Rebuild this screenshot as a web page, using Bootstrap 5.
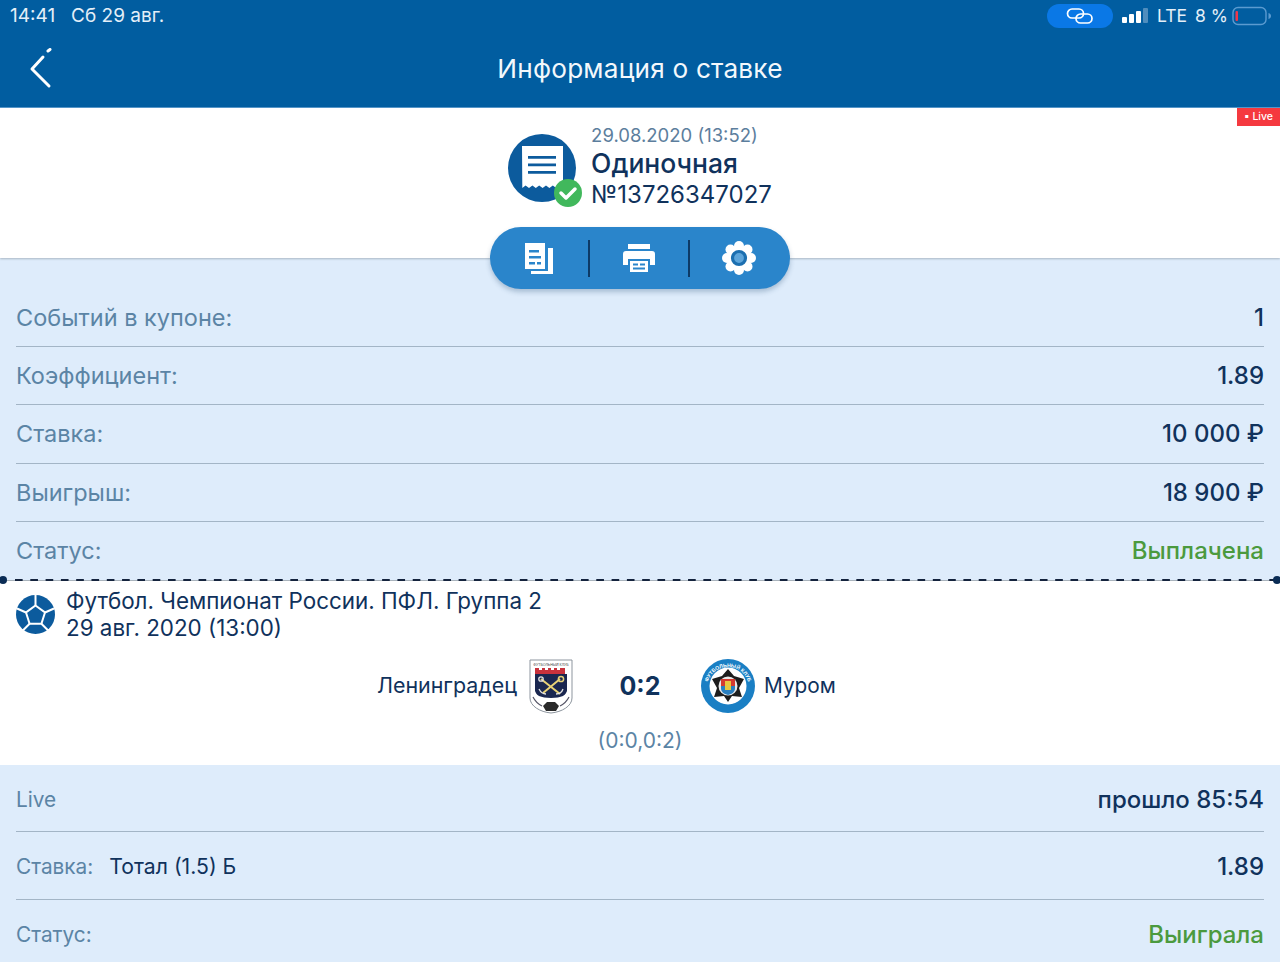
<!DOCTYPE html>
<html lang="ru"><head><meta charset="utf-8">
<link href="https://cdn.jsdelivr.net/npm/bootstrap@5.3.0/dist/css/bootstrap.min.css" rel="stylesheet">
<style>
html,body{margin:0;height:962px;overflow:hidden}
body{font-family:"Inter","Liberation Sans",sans-serif;background:#deecfb;color:#10325c}
.app-head{height:108px;background:#015da0;color:#fff;position:relative;border-bottom:1px solid #4f93c9}
.status-row{height:30px;padding:1px 8px 0 10px;font-size:19px;color:#e4eff8;line-height:30px}
.status-date{margin-left:16px}
.status-net{font-size:17.5px}
.link-pill{width:66px;height:24px;background:#0a78e6;border-radius:12px;margin-right:9px}
.lte{margin-left:8px}
.title-row{height:78px;padding:0 0 0 28px}
.title-text{font-size:26.2px;font-weight:400;flex:1;text-align:center;margin:0 53px 0 0;line-height:78px;color:#f3f8fc;letter-spacing:.2px}
.hero{height:150px;background:#fff;position:relative;box-shadow:0 1px 2px #a9b6c3}
.live-tag{position:absolute;right:0;top:0;width:43px;height:18px;background:#f5393f;color:#fff;font-size:10.5px;font-weight:500;line-height:18px;text-align:center}
.hero-in{padding-top:17px}
.bet-date{font-size:18.5px;line-height:20px;color:#5c7e9d}
.bet-type{font-size:26.5px;line-height:36px;color:#10325c;font-weight:500}
.bet-no{font-size:24px;line-height:28px;color:#10325c}
.bet-ico{position:relative;width:70px;height:70px;margin-right:13px;margin-top:9px}
.tool-pill{position:absolute;left:490px;top:227px;width:300px;height:62px;background:#2a85cb;border-radius:31px;box-shadow:0 3px 5px rgba(40,80,120,.3);z-index:2}
.tool-cell{flex:0 0 98px;text-align:center}
.tool-cell-last{flex:1;padding-right:2px;text-align:center}
.tool-sep{flex:0 0 2px;height:37px;background:#0d3a66}
.info-list{padding:31px 16px 0 16px;height:322px}
.info-row{height:58.2px;border-bottom:1px solid #a3b5c6;font-size:23.5px;padding-top:12px;line-height:34px}
.info-row:last-child{border-bottom:0}
.lbl{color:#5b84a5}
.val{color:#10325c;font-size:24px;font-weight:500}
.paid{color:#4b9a3e;font-size:24px;font-weight:500}
.event{height:184px;background:#fff;position:relative;padding:6px 0 0 16px}
.ticket-line{height:2px;position:relative;margin-top:-1px;z-index:2;background:linear-gradient(#0000 0 1px,#a9b3bc 1px 2px)}
.ticket-dash{position:absolute;left:15px;right:0;top:0;height:2px;background-image:linear-gradient(90deg,#14233d 0 8px,transparent 8px 15.3px);background-size:15.3px 2px}
.dot-l,.dot-r{position:absolute;top:-3px;width:8px;height:8px;border-radius:50%;background:#0a2c55}
.dot-l{left:-1px}.dot-r{right:-1px}
.ev-title{font-size:22.4px;line-height:27px;color:#10325c;margin-left:11px}
.match{position:absolute;left:0;right:0;top:75px;height:60px}
.team-a{position:absolute;right:763px;top:16px;font-size:21.4px;line-height:26px;color:#10325c}
.team-b{position:absolute;left:764px;top:17px;font-size:20.8px;line-height:26px;color:#10325c}
.crest-a{position:absolute;left:529px;top:3px}
.crest-b{position:absolute;left:701px;top:3px}
.score{position:absolute;left:0;right:0;top:15px;text-align:center;font-size:25px;font-weight:700;color:#10325c;line-height:30px}
.half{position:absolute;left:0;right:0;top:147px;text-align:center;font-size:21px;line-height:26px;color:#5b84a5}
.bottom-list{padding:0 16px}
.bot-row{height:67.4px;border-bottom:1px solid #a3b5c6;line-height:69px}
.bot-row:last-child{border-bottom:0}
.bot-lbl{font-size:20.8px;color:#5b84a5}
.bot-val{font-size:24px;font-weight:500;color:#10325c}
.bot-bet{font-size:21.2px;color:#10325c;margin-left:16px}
.won{font-size:24px;font-weight:500;color:#4b9a3e}
</style></head>
<body>
<header class="app-head">
  <div class="status-row d-flex align-items-center">
    <span>14:41</span><span class="status-date">Сб 29 авг.</span>
    <span class="ms-auto link-pill d-flex align-items-center justify-content-center">
      <svg width="28" height="18" viewBox="0 0 28 18" fill="none" stroke="#fff" stroke-width="1.7"><rect x="1.500" y="2" width="16" height="9" rx="4.500"/><rect x="10" y="7" width="16" height="9" rx="4.500"/></svg>
    </span>
    <svg width="27" height="15" viewBox="0 0 27 15"><rect x="0" y="9" width="5" height="6" rx="1" fill="#fff"/><rect x="7" y="6" width="5" height="9" rx="1" fill="#fff"/><rect x="14" y="3" width="5" height="12" rx="1" fill="#fff"/><rect x="21" y="0" width="5" height="15" rx="1" fill="#4f8dbd"/></svg>
    <span class="lte status-net">LTE</span><span class="ms-2 status-net">8 %</span>
    <svg class="ms-1" width="40" height="20" viewBox="0 0 40 20" fill="none"><rect x="1" y="1.500" width="33" height="17" rx="5" stroke="#5b9bd0" stroke-width="1.400"/><rect x="3.500" y="5" width="2.500" height="10" rx="1" fill="#f0374a"/><path d="M36.500 7v6c1.800-.6 2.500-1.600 2.500-3s-.7-2.400-2.500-3z" fill="#5b9bd0"/></svg>
  </div>
  <div class="title-row d-flex align-items-center">
    <svg width="25" height="42" viewBox="0 0 25 42" fill="none" stroke="#fff" stroke-width="3" stroke-linecap="round" stroke-linejoin="round"><path d="M21 38 4 21 15 9"/><path d="M20 3l2-1.500"/></svg>
    <h1 class="title-text">Информация о ставке</h1>
  </div>
</header>
<section class="hero">
  <div class="live-tag">▪ Live</div>
  <div class="hero-in d-flex justify-content-center">
    <div class="bet-ico">
      <svg width="76" height="76" viewBox="0 0 76 76"><circle cx="34" cy="34" r="34" fill="#0c5b9d"/><path d="M14 12h41v42l-3.400-2.500-3.400 2.500-3.400-2.500-3.400 2.500-3.400-2.500-3.400 2.500-3.400-2.500-3.400 2.500-3.400-2.500-3.400 2.500-3.400-2.500-3.300 2.500z" fill="#fff"/><path d="M20 22h28v2.800H20zM20 29.500h28v2.800H20zM20 37h28v2.800H20z" fill="#0c5b9d"/><circle cx="60" cy="59" r="14" fill="#41b85c"/><path d="M53 59l5 5 9-9" stroke="#fff" stroke-width="3.500" fill="none" stroke-linecap="round" stroke-linejoin="round"/></svg>
    </div>
    <div>
      <div class="bet-date">29.08.2020 (13:52)</div>
      <div class="bet-type">Одиночная</div>
      <div class="bet-no">№13726347027</div>
    </div>
  </div>
</section>
<div class="tool-pill d-flex align-items-center">
  <div class="tool-cell"><svg width="32" height="32" viewBox="0 0 32 32"><path d="M2 1h20v26H2z" fill="#fff"/><path d="M25 6h5v26H8v-3h17z" fill="#fff"/><path d="M6 8h10v2.500H6zM6 14h12v2.500H6zM6 20h6v2.500H6zM14 20h4v2.500h-4z" fill="#2a85cb"/></svg></div>
  <div class="tool-sep"></div>
  <div class="tool-cell"><svg width="32" height="28" viewBox="0 0 32 28"><path d="M5 0h22v5H5z" fill="#fff"/><path d="M3 7h26a3 3 0 013 3v11h-5v-6H5v6H0V10a3 3 0 013-3z" fill="#fff"/><rect x="7" y="17" width="18" height="11" fill="#fff"/><path d="M10 19.500h5v2h-5zM17 19.500h5v2h-5zM10 23.500h12v2H10z" fill="#2a85cb"/></svg></div>
  <div class="tool-sep"></div>
  <div class="tool-cell-last"><svg width="34" height="34" viewBox="0 0 34 34"><g fill="#fff"><circle cx="17" cy="5" r="5"/><circle cx="17" cy="29" r="5"/><circle cx="5" cy="17" r="5"/><circle cx="29" cy="17" r="5"/><circle cx="8.500" cy="8.500" r="5"/><circle cx="25.500" cy="8.500" r="5"/><circle cx="8.500" cy="25.500" r="5"/><circle cx="25.500" cy="25.500" r="5"/><circle cx="17" cy="17" r="12.500"/></g><circle cx="17" cy="17" r="6.500" fill="#5ea5da" stroke="#1c6fb0" stroke-width="3.200"/></svg></div>
</div>
<section class="info-list">
  <div class="info-row d-flex justify-content-between"><span class="lbl">Событий в купоне:</span><span class="val">1</span></div>
  <div class="info-row d-flex justify-content-between"><span class="lbl">Коэффициент:</span><span class="val">1.89</span></div>
  <div class="info-row d-flex justify-content-between"><span class="lbl">Ставка:</span><span class="val">10 000 ₽</span></div>
  <div class="info-row d-flex justify-content-between"><span class="lbl">Выигрыш:</span><span class="val">18 900 ₽</span></div>
  <div class="info-row d-flex justify-content-between"><span class="lbl">Статус:</span><span class="paid">Выплачена</span></div>
</section>
<div class="ticket-line"><span class="ticket-dash"></span><span class="dot-l"></span><span class="dot-r"></span></div>
<section class="event">
  <div class="d-flex align-items-center">
    <svg width="39" height="39" viewBox="0 0 39 39"><circle cx="19.500" cy="19.500" r="19.500" fill="#0c5b9d"/><path d="M19.500 10.500l9.500 7-3.600 11.200H13.600L10 17.500z" fill="#0c5b9d" stroke="#fff" stroke-width="2"/><path d="M19.500 10.500V0M29 17.500l9-4M25.400 28.700l7 7M13.600 28.700l-7 7M10 17.500l-9-4" stroke="#fff" stroke-width="2" fill="none"/></svg>
    <div class="ev-title">Футбол. Чемпионат России. ПФЛ. Группа 2<br>29 авг. 2020 (13:00)</div>
  </div>
  <div class="match">
    <div class="team-a">Ленинградец</div>
    <svg class="crest-a" width="44" height="55" viewBox="0 0 44 55"><path d="M1 1h42v38c0 8-10 14-21 15C11 53 1 47 1 39z" fill="#fff" stroke="#8d959e" stroke-width="1"/><text x="22" y="6.500" text-anchor="middle" font-size="3.600" fill="#444" font-family="Liberation Sans">ФУТБОЛЬНЫЙ КЛУБ</text><path d="M6 15V9h4v2h3V9h3v2h3V9h3v2h3V9h3v2h3V9h5v6z" fill="#c8323c"/><path d="M6 15h32v17c-1 2-1 3-4 5-3 1-7 2-12 2s-9-1-12-2c-3-2-3-3-4-5z" fill="#1a2750"/><path d="M12 20l19 15M31 20 14 34" stroke="#e8d276" stroke-width="2" fill="none"/><circle cx="32" cy="20" r="2.600" fill="none" stroke="#e8d276" stroke-width="1.500"/><circle cx="12" cy="20" r="2.200" fill="none" stroke="#e4e4e4" stroke-width="1.300"/><path d="M10 30c2 4 5 5 7 5M34 30c-1 3-4 5-7 5" stroke="#e4e4e4" stroke-width="1.300" fill="none"/><path d="M14 47l4-4h8l4 4-3 5h-10z" fill="#2a2a2a"/><path d="M4 38c2 4 5 7 9 9M40 38c-2 4-5 7-9 9" stroke="#556" stroke-width="1.200" fill="none"/></svg>
    <div class="score">0:2</div>
    <svg class="crest-b" width="54" height="54" viewBox="0 0 54 54"><defs><path id="arcTop" d="M6 29a21 21 0 0 1 42 0"/><path id="arcBot" d="M11 36a19 19 0 0 0 32 0"/></defs><circle cx="27" cy="27" r="27" fill="#1a7fc4"/><circle cx="27" cy="27" r="18.500" fill="#fff"/><text font-size="5.200" fill="#fff" font-family="Liberation Sans" font-weight="700" text-anchor="middle"><textPath href="#arcTop" startOffset="50%">ФУТБОЛЬНЫЙ КЛУБ</textPath></text><text font-size="5.500" fill="#fff" font-family="Liberation Sans" font-weight="700" text-anchor="middle"><textPath href="#arcBot" startOffset="50%">МУРОМ</textPath></text><path d="M27 10l6 7 10 3-5 9 3 9-10-1-4 6-4-6-10 1 3-9-5-9 10-3z" fill="#1d1d1d"/><circle cx="27" cy="27" r="9.500" fill="#e9e9e9"/><path d="M20 20h14v9c0 4-3 6-7 7-4-1-7-3-7-7z" fill="#2a7fc0"/><path d="M20 20h14v7H20z" fill="#d63a2f"/><rect x="24" y="22" width="6" height="9" fill="#e8c840"/></svg>
    <div class="team-b">Муром</div>
  </div>
  <div class="half">(0:0,0:2)</div>
</section>
<section class="bottom-list">
  <div class="bot-row d-flex justify-content-between"><span class="bot-lbl">Live</span><span class="bot-val">прошло 85:54</span></div>
  <div class="bot-row d-flex justify-content-between"><span><span class="bot-lbl">Ставка:</span><span class="bot-bet">Тотал (1.5) Б</span></span><span class="bot-val">1.89</span></div>
  <div class="bot-row d-flex justify-content-between"><span class="bot-lbl">Статус:</span><span class="won">Выиграла</span></div>
</section>
<script src="https://cdn.jsdelivr.net/npm/bootstrap@5.3.0/dist/js/bootstrap.bundle.min.js"></script>
</body></html>
